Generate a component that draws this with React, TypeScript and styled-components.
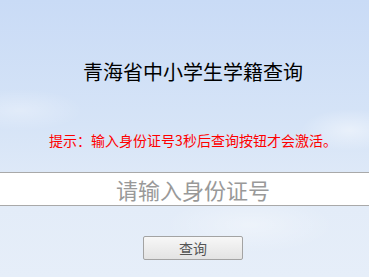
import styled, { createGlobalStyle } from 'styled-components';

const GlobalStyle = createGlobalStyle`
  html, body {
    margin: 0;
    padding: 0;
    height: 100%;
    overflow: hidden;
  }
  body {
    font-family: "Noto Sans CJK SC", "Liberation Sans", sans-serif;
    background:
      radial-gradient(ellipse 60px 26px at 30px 300px, rgba(255,255,255,0.55), rgba(255,255,255,0) 70%),
      radial-gradient(ellipse 70px 30px at 350px 130px, rgba(255,255,255,0.45), rgba(255,255,255,0) 70%),
      radial-gradient(ellipse 120px 40px at 250px 225px, rgba(255,255,255,0.35), rgba(255,255,255,0) 70%),
      radial-gradient(ellipse 90px 30px at 20px 110px, rgba(255,255,255,0.3), rgba(255,255,255,0) 70%),
      linear-gradient(to bottom, #c9dbf6 0%, #d6e4f7 45%, #e3ecf8 75%, #e6eef9 100%);
  }
`;

const Page = styled.div`
  box-sizing: border-box;
  width: 100%;
  height: 277px;
  overflow: hidden;
  display: flex;
  flex-direction: column;
  align-items: center;
  padding: 58px 0 0 17px;
`;

const Title = styled.h1`
  margin: 0;
  font-size: 20px;
  line-height: 28px;
  font-weight: normal;
  color: #000;
  white-space: nowrap;
`;

const Tip = styled.p`
  margin: 44px 0 0;
  font-size: 14px;
  line-height: 20px;
  color: #ff0000;
  white-space: nowrap;
`;

const IdInput = styled.input`
  box-sizing: border-box;
  flex-shrink: 0;
  width: 440px;
  height: 34px;
  margin-top: 22px;
  padding: 0;
  border: 1px solid #a9a9a9;
  background: #fff;
  font-family: inherit;
  font-size: 22px;
  text-align: center;
  color: #333;
  outline: none;

  &::placeholder {
    color: #999;
  }
`;

const QueryButton = styled.button`
  box-sizing: border-box;
  width: 100px;
  height: 24px;
  margin-top: 30px;
  padding: 0;
  border: 1px solid #a3a3a3;
  border-radius: 2px;
  background: linear-gradient(to bottom, #f7f7f7, #e3e3e3);
  font-family: inherit;
  font-size: 14px;
  color: #555;
  cursor: pointer;
`;

export default function App() {
  return (
    <>
      <GlobalStyle />
      <Page>
        <Title>青海省中小学生学籍查询</Title>
        <Tip>提示：输入身份证号3秒后查询按钮才会激活。</Tip>
        <IdInput type="text" placeholder="请输入身份证号" />
        <QueryButton type="button">查询</QueryButton>
      </Page>
    </>
  );
}
